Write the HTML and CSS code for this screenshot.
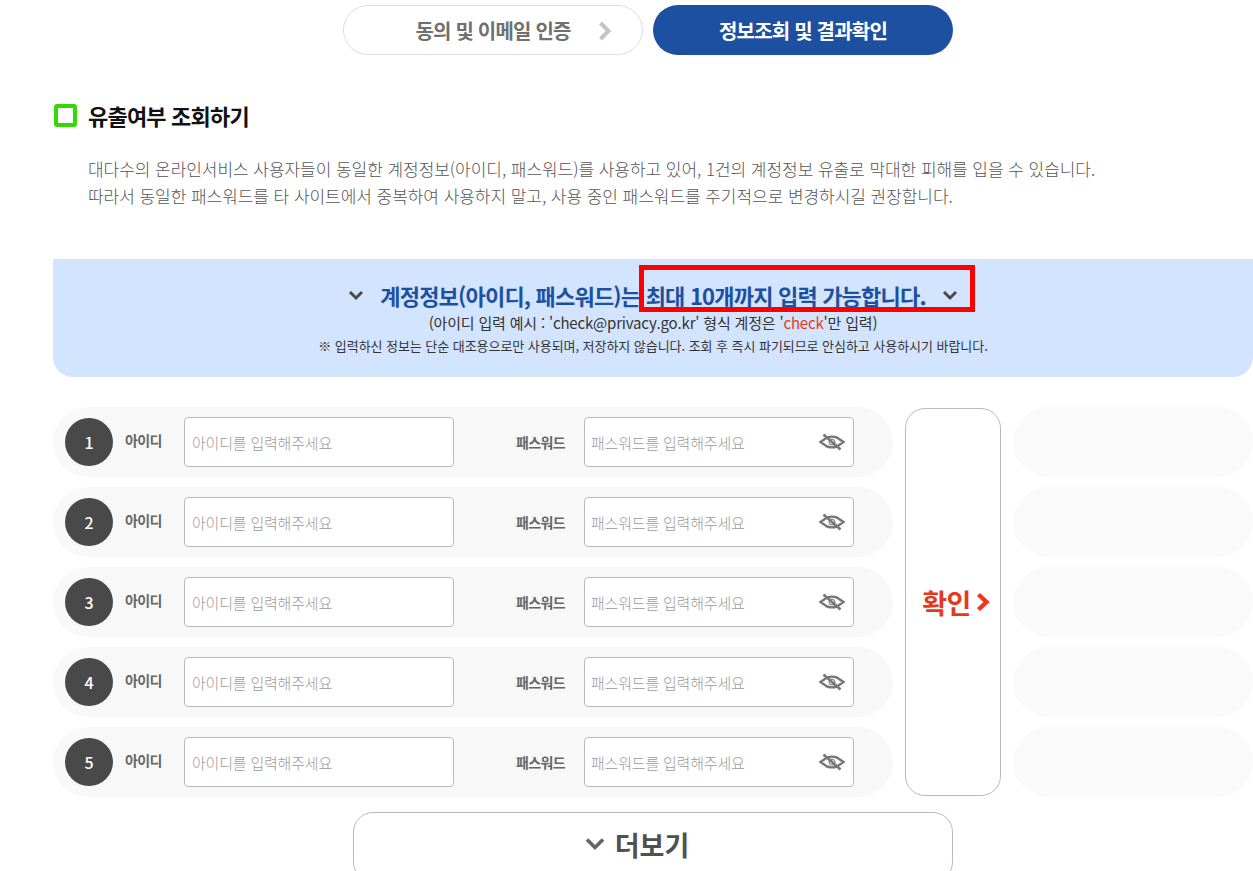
FILE: index.html
```html
<!DOCTYPE html>
<html lang="ko">
<head>
    <meta charset="UTF-8">
    <title>유출여부 조회하기</title>
    <link rel="stylesheet" href="styles.css">
</head>
<body>
    <div class="wrap">
        <div class="steps">
            <div class="step">
                <span>동의 및 이메일 인증</span>
                <svg class="step-arrow" width="14" height="20" viewBox="0 0 14 20"><path d="M2.500 2l8 8-8 8" fill="none" stroke="#c4c4c4" stroke-width="4"/></svg>
            </div>
            <div class="step step-on">정보조회 및 결과확인</div>
        </div>

        <h2 class="title"><span class="title-mark"></span>유출여부 조회하기</h2>
        <p class="desc">대다수의 온라인서비스 사용자들이 동일한 계정정보(아이디, 패스워드)를 사용하고 있어, 1건의 계정정보 유출로 막대한 피해를 입을 수 있습니다.<br>따라서 동일한 패스워드를 타 사이트에서 중복하여 사용하지 말고, 사용 중인 패스워드를 주기적으로 변경하시길 권장합니다.</p>

        <div class="notice">
            <div class="notice-head">
                <svg class="chev" width="16" height="11" viewBox="0 0 16 11"><path d="M2 2l6 6 6-6" fill="none" stroke="#4a4a4a" stroke-width="3"/></svg>
                <strong>계정정보(아이디, 패스워드)는 최대 10개까지 입력 가능합니다.</strong>
                <svg class="chev" width="16" height="11" viewBox="0 0 16 11"><path d="M2 2l6 6 6-6" fill="none" stroke="#4a4a4a" stroke-width="3"/></svg>
            </div>
            <p class="notice-sub">(아이디 입력 예시 : 'check@privacy.go.kr' 형식 계정은 '<em>check</em>'만 입력)</p>
            <p class="notice-small">※ 입력하신 정보는 단순 대조용으로만 사용되며, 저장하지 않습니다. 조회 후 즉시 파기되므로 안심하고 사용하시기 바랍니다.</p>
            <div class="redbox"></div>
        </div>

        <div class="form">
            <div class="rows">
                <div class="row">
                    <span class="num">1</span>
                    <label class="lbl lbl-id">아이디</label>
                    <input class="inp" type="text" placeholder="아이디를 입력해주세요">
                    <label class="lbl lbl-pw">패스워드</label>
                    <div class="pw">
                        <input class="inp" type="text" placeholder="패스워드를 입력해주세요">
                        <svg class="eye" width="26" height="18" viewBox="0 0 26 18"><path d="M1.500 9L8 4.500Q13 2.800 18 4.500L24.500 9L18 13.500Q13 15.200 8 13.500Z" fill="none" stroke="#777" stroke-width="2.400"/><circle cx="13" cy="9" r="2.800" fill="none" stroke="#999" stroke-width="1.400"/><path d="M4.500 1.500l17 15" stroke="#777" stroke-width="2.600"/></svg>
                    </div>
                </div>
                <div class="row">
                    <span class="num">2</span>
                    <label class="lbl lbl-id">아이디</label>
                    <input class="inp" type="text" placeholder="아이디를 입력해주세요">
                    <label class="lbl lbl-pw">패스워드</label>
                    <div class="pw">
                        <input class="inp" type="text" placeholder="패스워드를 입력해주세요">
                        <svg class="eye" width="26" height="18" viewBox="0 0 26 18"><path d="M1.500 9L8 4.500Q13 2.800 18 4.500L24.500 9L18 13.500Q13 15.200 8 13.500Z" fill="none" stroke="#777" stroke-width="2.400"/><circle cx="13" cy="9" r="2.800" fill="none" stroke="#999" stroke-width="1.400"/><path d="M4.500 1.500l17 15" stroke="#777" stroke-width="2.600"/></svg>
                    </div>
                </div>
                <div class="row">
                    <span class="num">3</span>
                    <label class="lbl lbl-id">아이디</label>
                    <input class="inp" type="text" placeholder="아이디를 입력해주세요">
                    <label class="lbl lbl-pw">패스워드</label>
                    <div class="pw">
                        <input class="inp" type="text" placeholder="패스워드를 입력해주세요">
                        <svg class="eye" width="26" height="18" viewBox="0 0 26 18"><path d="M1.500 9L8 4.500Q13 2.800 18 4.500L24.500 9L18 13.500Q13 15.200 8 13.500Z" fill="none" stroke="#777" stroke-width="2.400"/><circle cx="13" cy="9" r="2.800" fill="none" stroke="#999" stroke-width="1.400"/><path d="M4.500 1.500l17 15" stroke="#777" stroke-width="2.600"/></svg>
                    </div>
                </div>
                <div class="row">
                    <span class="num">4</span>
                    <label class="lbl lbl-id">아이디</label>
                    <input class="inp" type="text" placeholder="아이디를 입력해주세요">
                    <label class="lbl lbl-pw">패스워드</label>
                    <div class="pw">
                        <input class="inp" type="text" placeholder="패스워드를 입력해주세요">
                        <svg class="eye" width="26" height="18" viewBox="0 0 26 18"><path d="M1.500 9L8 4.500Q13 2.800 18 4.500L24.500 9L18 13.500Q13 15.200 8 13.500Z" fill="none" stroke="#777" stroke-width="2.400"/><circle cx="13" cy="9" r="2.800" fill="none" stroke="#999" stroke-width="1.400"/><path d="M4.500 1.500l17 15" stroke="#777" stroke-width="2.600"/></svg>
                    </div>
                </div>
                <div class="row">
                    <span class="num">5</span>
                    <label class="lbl lbl-id">아이디</label>
                    <input class="inp" type="text" placeholder="아이디를 입력해주세요">
                    <label class="lbl lbl-pw">패스워드</label>
                    <div class="pw">
                        <input class="inp" type="text" placeholder="패스워드를 입력해주세요">
                        <svg class="eye" width="26" height="18" viewBox="0 0 26 18"><path d="M1.500 9L8 4.500Q13 2.800 18 4.500L24.500 9L18 13.500Q13 15.200 8 13.500Z" fill="none" stroke="#777" stroke-width="2.400"/><circle cx="13" cy="9" r="2.800" fill="none" stroke="#999" stroke-width="1.400"/><path d="M4.500 1.500l17 15" stroke="#777" stroke-width="2.600"/></svg>
                    </div>
                </div>
            </div>

            <button class="confirm" type="button">
                <span>확인</span>
                <svg width="15" height="20" viewBox="0 0 15 20"><path d="M2.500 2.500L10.500 10l-8 7.500" fill="none" stroke="#f0351a" stroke-width="4.400"/></svg>
            </button>

            <div class="results">
                <div class="result"></div>
                <div class="result"></div>
                <div class="result"></div>
                <div class="result"></div>
                <div class="result"></div>
            </div>
        </div>

        <button class="more" type="button">
            <svg width="20" height="14" viewBox="0 0 20 14"><path d="M2 2.500l8 8 8-8" fill="none" stroke="#666" stroke-width="3.600"/></svg>
            <span>더보기</span>
        </button>
    </div>
</body>
</html>
```

FILE: styles.css
```css
* {
    box-sizing: border-box;
}

html, body {
    height: 871px;
    overflow: hidden;
}

body {
    margin: 0;
    background-color: #ffffff;
    font-family: "Noto Sans CJK KR", "Noto Sans", sans-serif;
    color: #333333;
}

.wrap {
    width: 1200px;
    margin-left: 53px;
    padding-top: 5px;
}

/* 상단 단계 */
.steps {
    display: flex;
    justify-content: center;
    gap: 10px;
    height: 50px;
    padding-right: 10px;
}

.step {
    position: relative;
    display: flex;
    align-items: center;
    justify-content: center;
    width: 300px;
    height: 50px;
    border: 1px solid #dddddd;
    border-radius: 25px;
    font-size: 20px;
    font-weight: 700;
    letter-spacing: -0.8px;
    color: #70706e;
}

.step-arrow {
    position: absolute;
    right: 30px;
    top: 15px;
}

.step-on {
    border: 0;
    background-color: #1e50a2;
    color: #ffffff;
}

/* 제목 */
.title {
    display: flex;
    align-items: center;
    margin: 42px 0 0;
    height: 36px;
    font-size: 22px;
    font-weight: 700;
    letter-spacing: -0.8px;
    color: #111111;
}

.title-mark {
    width: 23px;
    height: 23px;
    margin: 0 11px 0 1px;
    border: 4px solid #33d900;
    border-radius: 3px;
}

.desc {
    margin: 22px 0 0 35px;
    font-size: 17px;
    font-weight: 300;
    line-height: 27px;
    letter-spacing: -0.05px;
    color: #555555;
}

/* 안내 박스 */
.notice {
    position: relative;
    height: 118px;
    margin-top: 50px;
    padding-top: 19px;
    background-color: #d3e4ff;
    border-radius: 0 0 20px 20px;
    text-align: center;
}

.notice-head {
    display: flex;
    align-items: center;
    justify-content: center;
    gap: 16px;
    height: 34px;
    font-size: 22px;
    letter-spacing: -0.8px;
    color: #1e50a2;
}

.notice-head strong {
    font-weight: 700;
}

.notice-sub {
    margin: 0;
    font-size: 15px;
    line-height: 22px;
    letter-spacing: -0.18px;
    color: #333333;
}

.notice-sub em {
    font-style: normal;
    color: #e8391d;
}

.notice-small {
    margin: 2px 0 0;
    font-size: 13px;
    line-height: 20px;
    letter-spacing: -0.05px;
    color: #333333;
}

.redbox {
    position: absolute;
    left: 586px;
    top: 6px;
    width: 336px;
    height: 47px;
    border: 5px solid #ff0000;
}

/* 입력 폼 */
.form {
    display: flex;
    margin-top: 30px;
}

.rows, .results {
    display: flex;
    flex-direction: column;
    gap: 10px;
}

.rows {
    width: 840px;
}

.row {
    display: flex;
    align-items: center;
    height: 70px;
    padding-left: 12px;
    background-color: #f8f8f8;
    border-radius: 35px;
}

.num {
    display: flex;
    align-items: center;
    justify-content: center;
    flex: none;
    width: 48px;
    height: 48px;
    border-radius: 50%;
    background-color: #494949;
    color: #ffffff;
    font-size: 16px;
    font-weight: 500;
}

.lbl {
    flex: none;
    margin-top: -5px;
    font-size: 14px;
    font-weight: 700;
    letter-spacing: -0.6px;
    color: #666666;
}

.lbl-id {
    width: 71px;
    padding-left: 12px;
}

.lbl-pw {
    width: 130px;
    margin-top: 0;
    padding-left: 62px;
}

.inp {
    display: block;
    width: 270px;
    height: 50px;
    padding: 0 7px;
    background-color: #ffffff;
    border: 1px solid #bbbbbb;
    border-radius: 4px;
    font-family: inherit;
    font-size: 15px;
    letter-spacing: -0.2px;
    outline: none;
}

.inp::placeholder {
    color: #9a9a9a;
    font-weight: 300;
}

.pw .inp {
    padding-left: 6px;
}

.pw {
    position: relative;
}

.eye {
    position: absolute;
    right: 9px;
    top: 16px;
}

.confirm {
    display: flex;
    align-items: center;
    justify-content: center;
    gap: 5px;
    flex: none;
    width: 96px;
    height: 388px;
    margin: 1px 12px 0;
    padding: 0 0 0 7px;
    background-color: #ffffff;
    border: 1px solid #bbbbbb;
    border-radius: 20px;
    font-family: inherit;
    font-size: 27px;
    font-weight: 700;
    letter-spacing: -0.5px;
    color: #e5391d;
}

.results {
    width: 240px;
}

.result {
    height: 70px;
    background-color: #fafafa;
    border-radius: 35px;
}

.more {
    display: flex;
    align-items: center;
    justify-content: center;
    gap: 10px;
    width: 600px;
    height: 70px;
    margin: 15px 0 0 300px;
    padding: 0 32px 6px 0;
    background-color: #ffffff;
    border: 1px solid #bbbbbb;
    border-radius: 20px;
    font-family: inherit;
    font-size: 27px;
    font-weight: 700;
    color: #505050;
}
```
